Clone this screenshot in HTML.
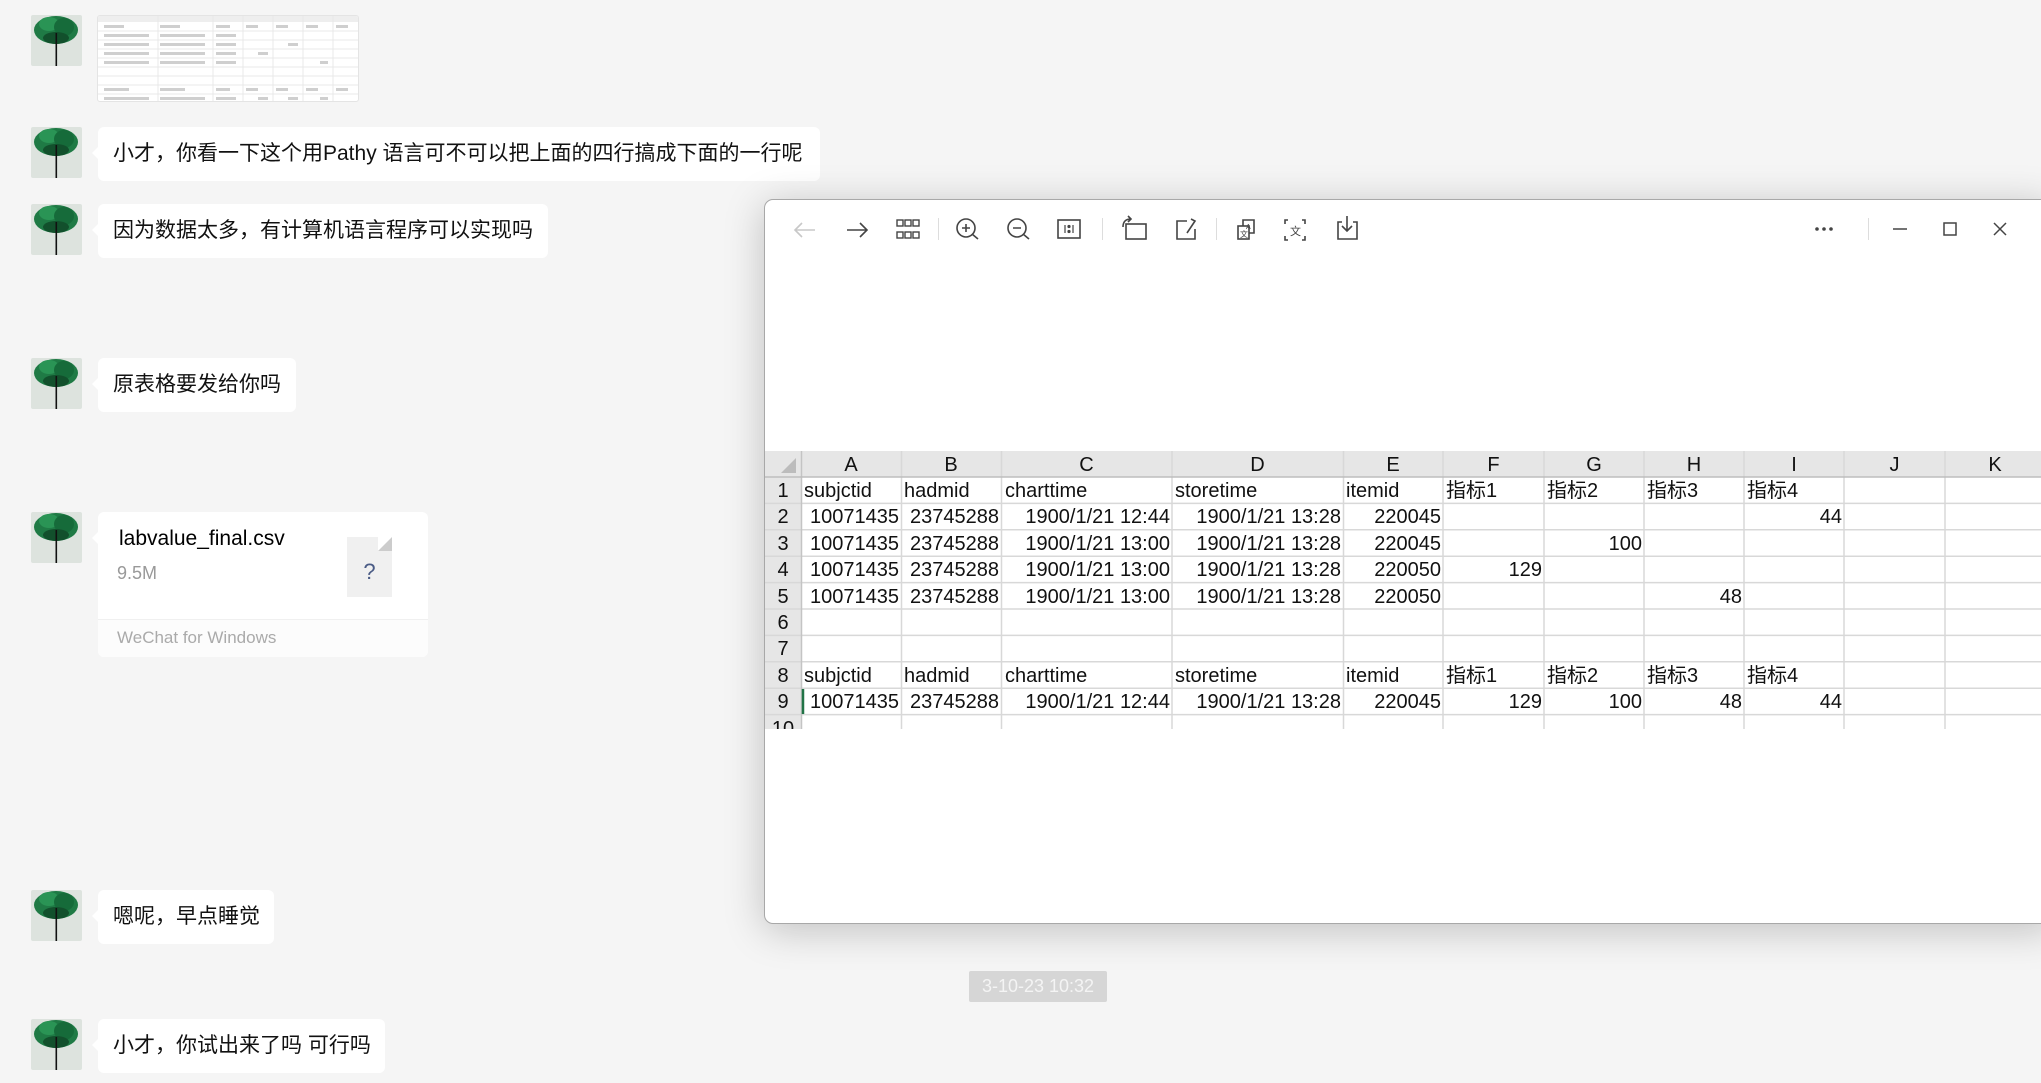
<!DOCTYPE html>
<html><head><meta charset="utf-8">
<style>
*{margin:0;padding:0;box-sizing:border-box}
body{width:2041px;height:1083px;background:#f5f5f5;position:relative;overflow:hidden;font-family:"Liberation Sans","Noto Sans CJK SC",sans-serif;}
.av{position:absolute;left:31px;width:51px;height:51px;border-radius:2px;overflow:hidden}
.bub{position:absolute;left:98px;height:54px;background:#fff;border-radius:6px;font-size:21px;color:#111;line-height:54px;padding-left:15px;white-space:nowrap}
.bub:before{content:"";position:absolute;left:-6px;top:20px;border:6px solid transparent;border-right-color:#fff;border-left:0}
.win{position:absolute;left:764px;top:199px;width:1290px;height:725px;background:#fff;border:1px solid #a8a8a8;border-radius:9px 9px 0 9px;box-shadow:0 6px 40px rgba(0,0,0,.22)}
.sep{position:absolute;top:218px;width:1px;height:22px;background:#ddd}
.c{position:absolute;font-size:20px;color:#111;white-space:nowrap;line-height:28px}
.r{position:absolute;font-size:20px;line-height:28px;color:#111;text-align:right;white-space:nowrap}
</style></head><body>

<svg width="0" height="0" style="position:absolute"><defs>
<symbol id="tree" viewBox="0 0 51 51">
<rect width="51" height="51" fill="#dde3de"/>
<ellipse cx="25" cy="15" rx="22" ry="14" fill="#1f7a45"/>
<ellipse cx="18" cy="9" rx="10" ry="7" fill="#2a9455"/>
<ellipse cx="33" cy="12" rx="10" ry="9" fill="#166b3a"/>
<ellipse cx="25" cy="23" rx="13" ry="6" fill="#12502c"/>
<rect x="24.5" y="18" width="1.6" height="33" fill="#111"/>
</symbol></defs></svg>

<div style="position:absolute;left:97px;top:15px;width:262px;height:87px;background:#fff;border:1px solid #e4e4e4;border-radius:3px;overflow:hidden">
<svg width="262" height="87">
<rect width="262" height="6" fill="#eee"/>
<g stroke="#e8e8e8" stroke-width="1">
<line x1="0" y1="15" x2="262" y2="15"/><line x1="0" y1="24" x2="262" y2="24"/><line x1="0" y1="33" x2="262" y2="33"/><line x1="0" y1="42" x2="262" y2="42"/><line x1="0" y1="51" x2="262" y2="51"/><line x1="0" y1="60" x2="262" y2="60"/><line x1="0" y1="69" x2="262" y2="69"/><line x1="0" y1="78" x2="262" y2="78"/>
<line x1="60" y1="0" x2="60" y2="87"/><line x1="115" y1="0" x2="115" y2="87"/><line x1="145" y1="0" x2="145" y2="87"/><line x1="175" y1="0" x2="175" y2="87"/><line x1="205" y1="0" x2="205" y2="87"/><line x1="235" y1="0" x2="235" y2="87"/>
</g>
<g fill="#cfcfcf">
<rect x="6" y="9" width="20" height="3"/><rect x="62" y="9" width="20" height="3"/><rect x="118" y="9" width="14" height="3"/><rect x="148" y="9" width="12" height="3"/><rect x="178" y="9" width="12" height="3"/><rect x="208" y="9" width="12" height="3"/><rect x="238" y="9" width="12" height="3"/>
<rect x="6" y="18" width="45" height="3"/><rect x="62" y="18" width="45" height="3"/><rect x="118" y="18" width="20" height="3"/>
<rect x="6" y="27" width="45" height="3"/><rect x="62" y="27" width="45" height="3"/><rect x="118" y="27" width="20" height="3"/><rect x="190" y="27" width="10" height="3"/>
<rect x="6" y="36" width="45" height="3"/><rect x="62" y="36" width="45" height="3"/><rect x="118" y="36" width="20" height="3"/><rect x="160" y="36" width="10" height="3"/>
<rect x="6" y="45" width="45" height="3"/><rect x="62" y="45" width="45" height="3"/><rect x="118" y="45" width="20" height="3"/><rect x="222" y="45" width="8" height="3"/>
<rect x="6" y="72" width="25" height="3"/><rect x="62" y="72" width="25" height="3"/><rect x="118" y="72" width="14" height="3"/><rect x="148" y="72" width="12" height="3"/><rect x="178" y="72" width="12" height="3"/><rect x="208" y="72" width="12" height="3"/><rect x="238" y="72" width="12" height="3"/>
<rect x="6" y="81" width="45" height="3"/><rect x="62" y="81" width="45" height="3"/><rect x="118" y="81" width="20" height="3"/><rect x="160" y="81" width="10" height="3"/><rect x="190" y="81" width="10" height="3"/><rect x="222" y="81" width="8" height="3"/>
</g></svg></div>

<svg class="av" style="top:15px"><use href="#tree"/></svg>
<svg class="av" style="top:127px"><use href="#tree"/></svg>
<div class="bub" style="top:127px;width:722px">小才，你看一下这个用Pathy 语言可不可以把上面的四行搞成下面的一行呢</div>
<svg class="av" style="top:204px"><use href="#tree"/></svg>
<div class="bub" style="top:204px;width:450px">因为数据太多，有计算机语言程序可以实现吗</div>
<svg class="av" style="top:358px"><use href="#tree"/></svg>
<div class="bub" style="top:358px;width:198px">原表格要发给你吗</div>
<svg class="av" style="top:512px"><use href="#tree"/></svg>
<div class="bub" style="top:512px;width:330px;height:145px;padding:0">
 <div style="position:absolute;left:21px;top:14px;line-height:26px;font-size:21px;color:#000">labvalue_final.csv</div>
 <div style="position:absolute;left:19px;top:49px;line-height:24px;font-size:18px;color:#999">9.5M</div>
 <div style="position:absolute;left:249px;top:25px;width:45px;height:60px;background:#f0f0f0">
  <div style="position:absolute;right:0;top:0;border-style:solid;border-width:0 0 14px 14px;border-color:transparent transparent #ccc #fff"></div>
  <div style="position:absolute;left:0;width:45px;top:22px;text-align:center;font-size:22px;line-height:26px;color:#4a5b85">?</div>
 </div>
 <div style="position:absolute;left:0;top:107px;width:330px;height:38px;background:#fcfcfc;border-top:1px solid #f0f0f0;border-radius:0 0 6px 6px;font-size:17px;line-height:36px;color:#aaa;padding-left:19px">WeChat for Windows</div>
</div>
<svg class="av" style="top:890px"><use href="#tree"/></svg>
<div class="bub" style="top:890px;width:176px">嗯呢，早点睡觉</div>
<svg class="av" style="top:1019px"><use href="#tree"/></svg>
<div class="bub" style="top:1019px;width:287px">小才，你试出来了吗 可行吗</div>

<div style="position:absolute;left:969px;top:971px;width:138px;height:31px;background:#d6d6d6;border-radius:2px;color:#f4f4f4;font-size:18px;line-height:31px;text-align:center">3-10-23 10:32</div>

<div class="win"></div>
<svg style="position:absolute;left:780px;top:210px" width="600" height="40" fill="none" stroke="#444" stroke-width="1.6">
<path d="M35 20h-20M22 13l-7 7 7 7" stroke="#c8c8c8"/>
<path d="M67 20h20M80 13l7 7-7 7"/>
<g stroke-width="1.4"><rect x="117" y="10" width="6" height="6"/><rect x="125" y="10" width="6" height="6"/><rect x="133" y="10" width="6" height="6"/><rect x="117" y="22" width="6" height="6"/><rect x="125" y="22" width="6" height="6"/><rect x="133" y="22" width="6" height="6"/></g>
<circle cx="186" cy="18" r="9"/><path d="M182 18h8M186 14v8M192 24l6 5"/>
<circle cx="237" cy="18" r="9"/><path d="M233 18h8M243 24l6 5"/>
<rect x="278" y="10" width="22" height="18"/><path d="M285 15v8M293 15v8" stroke-width="1.2"/><circle cx="289" cy="16.5" r=".8" fill="#444"/><circle cx="289" cy="21.5" r=".8" fill="#444"/>
<rect x="346" y="14" width="20" height="15"/><path d="M343 17q0-8 8-8M348 6l3 3-3 3"/>
<path d="M407 11h-10v18h18v-10M411 9l4 2-8 12"/>
<rect x="458" y="16" width="11" height="13"/><path d="M463 16v-6h11v13h-5"/><text x="460" y="27" font-size="8" fill="#444" stroke="none" font-family="Liberation Sans">文</text><text x="466" y="19" font-size="7" fill="#444" stroke="none" font-family="Liberation Sans">A</text>
<path d="M508 10h-3v4M508 30h-3v-4M522 10h3v4M522 30h3v-4"/><text x="510" y="25" font-size="11" fill="#444" stroke="none" font-family="Liberation Sans">文</text>
<path d="M562 12h-4v17h19v-17h-4M567 6v15M562 16l5 5 5-5"/>
</svg>
<div class="sep" style="left:938px"></div><div class="sep" style="left:1102px"></div><div class="sep" style="left:1216px"></div><div class="sep" style="left:1868px"></div>
<svg style="position:absolute;left:1810px;top:210px" width="220" height="40" fill="none" stroke="#444" stroke-width="1.5">
<circle cx="7" cy="19" r="1.8" fill="#444" stroke="none"/><circle cx="14" cy="19" r="1.8" fill="#444" stroke="none"/><circle cx="21" cy="19" r="1.8" fill="#444" stroke="none"/>
<path d="M83 19h14"/><rect x="134" y="13" width="12" height="12"/><path d="M184 13l12 12M196 13l-12 12"/>
</svg>

<div style="position:absolute;left:765px;top:451px;width:1276px;height:278px;overflow:hidden">
<svg width="1276" height="278" style="position:absolute;left:0;top:0">
<rect x="0" y="0" width="1276" height="26" fill="#e6e6e6"/>
<rect x="0" y="26" width="36" height="252" fill="#e6e6e6"/>
<path d="M31 7v15h-15z" fill="#bcbcbc"/>
<g stroke="#d8d8d8" stroke-width="1.5">
<line x1="0" y1="52.4" x2="1276" y2="52.4"/><line x1="0" y1="78.8" x2="1276" y2="78.8"/><line x1="0" y1="105.2" x2="1276" y2="105.2"/><line x1="0" y1="131.6" x2="1276" y2="131.6"/><line x1="0" y1="158" x2="1276" y2="158"/><line x1="0" y1="184.4" x2="1276" y2="184.4"/><line x1="0" y1="210.8" x2="1276" y2="210.8"/><line x1="0" y1="237.2" x2="1276" y2="237.2"/><line x1="0" y1="263.6" x2="1276" y2="263.6"/>
<line x1="136.5" y1="0" x2="136.5" y2="278"/><line x1="236.5" y1="0" x2="236.5" y2="278"/><line x1="407" y1="0" x2="407" y2="278"/><line x1="578.5" y1="0" x2="578.5" y2="278"/><line x1="678" y1="0" x2="678" y2="278"/><line x1="779" y1="0" x2="779" y2="278"/><line x1="879" y1="0" x2="879" y2="278"/><line x1="979" y1="0" x2="979" y2="278"/><line x1="1079" y1="0" x2="1079" y2="278"/><line x1="1180" y1="0" x2="1180" y2="278"/>
</g>
<line x1="36.5" y1="0" x2="36.5" y2="278" stroke="#c4c4c4" stroke-width="1.5"/>
<line x1="0" y1="26" x2="1276" y2="26" stroke="#bdbdbd" stroke-width="1.5"/>
<line x1="38" y1="238" x2="38" y2="263" stroke="#217346" stroke-width="2.5"/>
</svg>
<div style="position:absolute;left:0;top:0">
<span class="c" style="left:36px;width:100px;text-align:center">A</span><span class="c" style="left:136px;width:100px;text-align:center">B</span><span class="c" style="left:236px;width:171px;text-align:center">C</span><span class="c" style="left:407px;width:171px;text-align:center">D</span><span class="c" style="left:578px;width:100px;text-align:center">E</span><span class="c" style="left:678px;width:101px;text-align:center">F</span><span class="c" style="left:779px;width:100px;text-align:center">G</span><span class="c" style="left:879px;width:100px;text-align:center">H</span><span class="c" style="left:979px;width:100px;text-align:center">I</span><span class="c" style="left:1079px;width:101px;text-align:center">J</span><span class="c" style="left:1180px;width:100px;text-align:center">K</span>
</div>
<div style="position:absolute;left:0;top:26px">
<span class="c" style="left:0;top:0;width:36px;text-align:center">1</span>
<span class="c" style="left:0;top:26.4px;width:36px;text-align:center">2</span>
<span class="c" style="left:0;top:52.8px;width:36px;text-align:center">3</span>
<span class="c" style="left:0;top:79.2px;width:36px;text-align:center">4</span>
<span class="c" style="left:0;top:105.6px;width:36px;text-align:center">5</span>
<span class="c" style="left:0;top:132px;width:36px;text-align:center">6</span>
<span class="c" style="left:0;top:158.4px;width:36px;text-align:center">7</span>
<span class="c" style="left:0;top:184.8px;width:36px;text-align:center">8</span>
<span class="c" style="left:0;top:211.2px;width:36px;text-align:center">9</span>
<span class="c" style="left:0;top:237.6px;width:36px;text-align:center">10</span>
<span class="c" style="left:39px;top:0">subjctid</span><span class="c" style="left:139px;top:0">hadmid</span><span class="c" style="left:240px;top:0">charttime</span><span class="c" style="left:410px;top:0">storetime</span><span class="c" style="left:581px;top:0">itemid</span><span class="c" style="left:681px;top:0">指标1</span><span class="c" style="left:782px;top:0">指标2</span><span class="c" style="left:882px;top:0">指标3</span><span class="c" style="left:982px;top:0">指标4</span>
<span class="c" style="left:39px;top:184.8px">subjctid</span><span class="c" style="left:139px;top:184.8px">hadmid</span><span class="c" style="left:240px;top:184.8px">charttime</span><span class="c" style="left:410px;top:184.8px">storetime</span><span class="c" style="left:581px;top:184.8px">itemid</span><span class="c" style="left:681px;top:184.8px">指标1</span><span class="c" style="left:782px;top:184.8px">指标2</span><span class="c" style="left:882px;top:184.8px">指标3</span><span class="c" style="left:982px;top:184.8px">指标4</span>
</div>
<div style="position:absolute;top:52.4px;left:0;width:1276px;height:26.4px">
<span class="r" style="left:36px;width:98px">10071435</span><span class="r" style="left:136px;width:98px">23745288</span><span class="r" style="left:236px;width:169px">1900/1/21 12:44</span><span class="r" style="left:407px;width:169px">1900/1/21 13:28</span><span class="r" style="left:578px;width:98px">220045</span><span class="r" style="left:979px;width:98px">44</span></div>
<div style="position:absolute;top:78.8px;left:0;width:1276px;height:26.4px">
<span class="r" style="left:36px;width:98px">10071435</span><span class="r" style="left:136px;width:98px">23745288</span><span class="r" style="left:236px;width:169px">1900/1/21 13:00</span><span class="r" style="left:407px;width:169px">1900/1/21 13:28</span><span class="r" style="left:578px;width:98px">220045</span><span class="r" style="left:779px;width:98px">100</span></div>
<div style="position:absolute;top:105.2px;left:0;width:1276px;height:26.4px">
<span class="r" style="left:36px;width:98px">10071435</span><span class="r" style="left:136px;width:98px">23745288</span><span class="r" style="left:236px;width:169px">1900/1/21 13:00</span><span class="r" style="left:407px;width:169px">1900/1/21 13:28</span><span class="r" style="left:578px;width:98px">220050</span><span class="r" style="left:678px;width:99px">129</span></div>
<div style="position:absolute;top:131.6px;left:0;width:1276px;height:26.4px">
<span class="r" style="left:36px;width:98px">10071435</span><span class="r" style="left:136px;width:98px">23745288</span><span class="r" style="left:236px;width:169px">1900/1/21 13:00</span><span class="r" style="left:407px;width:169px">1900/1/21 13:28</span><span class="r" style="left:578px;width:98px">220050</span><span class="r" style="left:879px;width:98px">48</span></div>
<div style="position:absolute;top:237.2px;left:0;width:1276px;height:26.4px">
<span class="r" style="left:36px;width:98px">10071435</span><span class="r" style="left:136px;width:98px">23745288</span><span class="r" style="left:236px;width:169px">1900/1/21 12:44</span><span class="r" style="left:407px;width:169px">1900/1/21 13:28</span><span class="r" style="left:578px;width:98px">220045</span><span class="r" style="left:678px;width:99px">129</span><span class="r" style="left:779px;width:98px">100</span><span class="r" style="left:879px;width:98px">48</span><span class="r" style="left:979px;width:98px">44</span></div>
</div>
</body></html>
